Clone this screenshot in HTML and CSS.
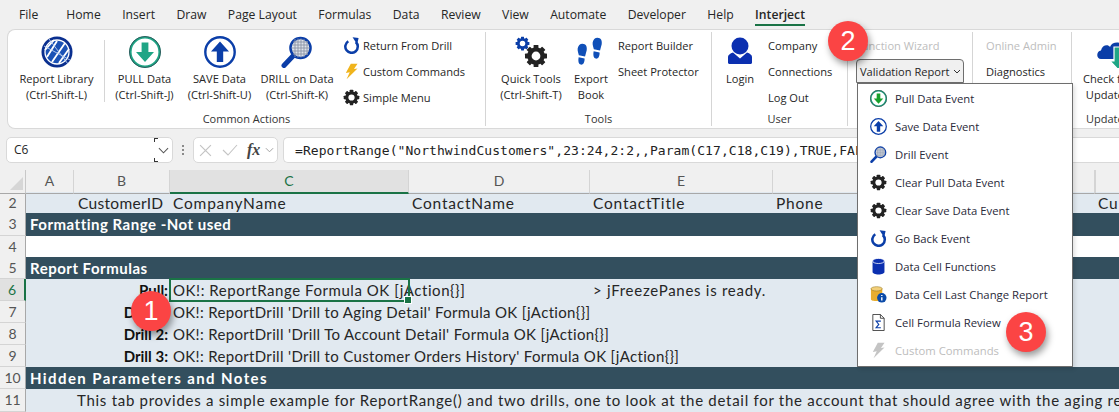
FILE: index.html
```html
<!DOCTYPE html>
<html lang="en">
<head>
<meta charset="utf-8">
<title>Interject ribbon</title>
<link rel="stylesheet" href="styles.css">
</head>
<body>
<svg class="defs" width="0" height="0" aria-hidden="true">
  <defs>
    <symbol id="gear" viewBox="0 0 24 24">
      <circle cx="12" cy="12" r="6.6" fill="none" stroke="currentColor" stroke-width="4.4"/>
      <g fill="currentColor">
        <rect x="9.6" y="1" width="4.8" height="22" rx=".6"/>
        <rect x="9.6" y="1" width="4.8" height="22" rx=".6" transform="rotate(45 12 12)"/>
        <rect x="9.6" y="1" width="4.8" height="22" rx=".6" transform="rotate(90 12 12)"/>
        <rect x="9.6" y="1" width="4.8" height="22" rx=".6" transform="rotate(135 12 12)"/>
      </g>
      <circle cx="12" cy="12" r="4.4" fill="#fff"/>
    </symbol>
    <symbol id="pull" viewBox="0 0 32 32">
      <circle cx="16" cy="16" r="14.6" fill="#fff" stroke="#1fa585" stroke-width="2.4"/>
      <circle cx="16" cy="16" r="15.6" fill="none" stroke="#2b4a52" stroke-width=".8"/>
      <path d="M12.6 6.500h6.800v9.500h5.600L16 26 7 16h5.600z" fill="#1fa585"/>
    </symbol>
    <symbol id="pullsmall" viewBox="0 0 32 32">
      <circle cx="16" cy="16" r="14.5" fill="#fff" stroke="#1fa585" stroke-width="3"/>
      <circle cx="16" cy="16" r="15.5" fill="none" stroke="#333" stroke-width="1"/>
      <path d="M12.6 6.500h6.800v9.500h5.600L16 26 7 16h5.600z" fill="#18a02c"/>
    </symbol>
    <symbol id="save" viewBox="0 0 32 32">
      <circle cx="16" cy="16" r="14.700" fill="#fff" stroke="#0b3ea8" stroke-width="2.400"/>
      <path d="M12.800 26V15.500H7L16 5.500l9 10h-5.800V26z" fill="#0b3ea8"/>
    </symbol>
    <symbol id="drill" viewBox="0 0 32 32">
      <path d="M3 29.500 12 20" stroke="#0b3ea8" stroke-width="5" stroke-linecap="round"/>
      <circle cx="19.500" cy="12" r="10" fill="#dfe3ea" stroke="#0b3ea8" stroke-width="2.600"/>
      <path d="M12 6h15M11 9h17M10.500 12h18M11 15h17M12 18h15M14 3v18M17 2.500v19M20 2.500v19M23 3v18M26 5v14" stroke="#8a93a6" stroke-width=".9"/>
    </symbol>
    <symbol id="back" viewBox="0 0 24 24">
      <path d="M7.500 6A8.800 8.800 0 1 0 18 7" fill="none" stroke="#0b3ea8" stroke-width="3.600"/>
      <path d="M13.500 .5 22 1.500 20 10.500z" fill="#0b3ea8"/>
    </symbol>
    <symbol id="bolt" viewBox="0 0 20 24">
      <path d="M9 1h9.500l-5 7.500 5-.8L3 23l4.500-10L2 14z" fill="currentColor"/>
    </symbol>
    <symbol id="foot" viewBox="0 0 14 26">
      <path d="M7.500.8c3.600 0 5.300 3 4.600 7-.4 2.300-1.300 4.300-1.800 6.700L3.600 13.200C3 10.500 2 8.600 2.300 6 2.700 3 4.800.8 7.500.8z" fill="#0f4fb8"/>
      <path d="M3.400 15.500l6.400 1.200c.2 3-.9 7.200-4 6.700-2.800-.4-3.100-4.600-2.400-7.900z" fill="#0f4fb8"/>
    </symbol>
    <symbol id="db" viewBox="0 0 16 20">
      <path d="M1 3.500v13C1 18 4 19.500 8 19.500s7-1.500 7-3v-13z" fill="#0b2fb0"/>
      <ellipse cx="8" cy="3.500" rx="7" ry="3" fill="#0b2fb0" stroke="#fff" stroke-width=".9"/>
    </symbol>
  </defs>
</svg>

<nav class="tabs">
  <span class="tab tab-file">File</span>
  <span class="tab">Home</span>
  <span class="tab">Insert</span>
  <span class="tab">Draw</span>
  <span class="tab">Page Layout</span>
  <span class="tab">Formulas</span>
  <span class="tab">Data</span>
  <span class="tab">Review</span>
  <span class="tab">View</span>
  <span class="tab">Automate</span>
  <span class="tab">Developer</span>
  <span class="tab">Help</span>
  <span class="tab tab-active">Interject</span>
</nav>

<section class="ribbon">
  <div class="group g-common">
    <div class="group-body">
      <div class="big w-lib">
        <svg class="big-icon" viewBox="0 0 32 32">
          <circle cx="16" cy="16" r="15.500" fill="#0a2f8f"/>
          <circle cx="16" cy="16" r="12" fill="#1b52b5" stroke="#fff" stroke-width="1.300"/>
          <path d="M6 21 16 5M11 26 24 7M18 27 28 13M4 14 13 4" stroke="#fff" stroke-width="1.800" fill="none"/>
          <path d="M3 10 29 24M8 3 27 28" stroke="#bcd0f0" stroke-width=".9"/>
        </svg>
        <span class="big-text">Report Library<br>(Ctrl-Shift-L)</span>
      </div>
      <i class="inner-sep"></i>
      <div class="big w-pull">
        <svg class="big-icon"><use href="#pull"/></svg>
        <span class="big-text">PULL Data<br>(Ctrl-Shift-J)</span>
      </div>
      <div class="big w-save">
        <svg class="big-icon"><use href="#save"/></svg>
        <span class="big-text">SAVE Data<br>(Ctrl-Shift-U)</span>
      </div>
      <div class="big w-drill">
        <svg class="big-icon"><use href="#drill"/></svg>
        <span class="big-text">DRILL on Data<br>(Ctrl-Shift-K)</span>
      </div>
      <div class="small-col sc-common">
        <div class="small"><svg class="small-icon"><use href="#back"/></svg>Return From Drill</div>
        <div class="small"><svg class="small-icon bolt-y"><use href="#bolt"/></svg>Custom Commands</div>
        <div class="small"><svg class="small-icon gear-k"><use href="#gear"/></svg>Simple Menu</div>
      </div>
    </div>
    <div class="group-label">Common Actions</div>
  </div>

  <div class="group g-tools">
    <div class="group-body">
      <div class="big w-quick">
        <svg class="big-icon quick" viewBox="0 0 32 32">
          <svg x="0" y="0" width="15" height="15" class="gear-b"><use href="#gear"/></svg>
          <svg x="9" y="8" width="24" height="24" class="gear-k"><use href="#gear"/></svg>
        </svg>
        <span class="big-text">Quick Tools<br>(Ctrl-Shift-T)</span>
      </div>
      <div class="big w-export">
        <svg class="big-icon" viewBox="0 0 32 32">
          <svg x="0" y="7" width="14" height="24"><use href="#foot"/></svg>
          <svg x="15" y="1" width="14" height="24"><use href="#foot"/></svg>
        </svg>
        <span class="big-text">Export<br>Book</span>
      </div>
      <div class="small-col sc-tools">
        <div class="small">Report Builder</div>
        <div class="small">Sheet Protector</div>
      </div>
    </div>
    <div class="group-label">Tools</div>
  </div>

  <div class="group g-user">
    <div class="group-body">
      <div class="big w-login">
        <svg class="big-icon" viewBox="0 0 32 32">
          <circle cx="16" cy="10" r="8.500" fill="#0b2fb0"/>
          <path d="M4 21c0-2 2-3.500 5-4.500l7 6 7-6c3 1 5 2.500 5 4.500v5.500c0 1-1 1.500-2 1.500H6c-1 0-2-.5-2-1.500z" fill="#0b2fb0"/>
        </svg>
        <span class="big-text">Login</span>
      </div>
      <div class="small-col sc-user">
        <div class="small">Company</div>
        <div class="small">Connections</div>
        <div class="small">Log Out</div>
      </div>
    </div>
    <div class="group-label">User</div>
  </div>

  <div class="group g-func">
    <div class="group-body">
      <div class="small-col sc-func">
        <div class="small disabled">Function Wizard</div>
        <div class="small vr-btn">Validation Report
          <svg class="chev" viewBox="0 0 8 5"><path d="M1 1l3 3 3-3" fill="none" stroke="#333" stroke-width="1"/></svg>
        </div>
      </div>
    </div>
  </div>

  <div class="group g-admin">
    <div class="group-body">
      <div class="small-col sc-admin">
        <div class="small disabled">Online Admin</div>
        <div class="small">Diagnostics</div>
      </div>
    </div>
  </div>

  <div class="group g-upd">
    <div class="group-body">
      <div class="big w-upd">
        <svg class="big-icon upd-icon" viewBox="0 0 32 32">
          <path d="M4 23c-5 0-5-8 0-8.500C5 9 11 8 13 11c2-6 13-6 14 1 5 0 5 11 0 11z" fill="#0b3ea8"/>
          <path d="M17 11h9v14h4l-8.500 9L13 25h4z" fill="#1fa585" stroke="#fff" stroke-width="1.200"/>
        </svg>
        <span class="big-text">Check for<br>Updates</span>
      </div>
    </div>
    <div class="group-label lbl-upd">Updates</div>
  </div>
</section>

<section class="fbar">
  <div class="namebox"><span class="nb-text">C6</span>
    <span class="nb-drop"><svg class="nb-chev" viewBox="0 0 12 7"><path d="M1 1l5 5 5-5" fill="none" stroke="#555" stroke-width="1.100"/></svg></span>
  </div>
  <div class="fdots"><i></i><i></i><i></i></div>
  <div class="fxbox">
    <svg class="fx-x" viewBox="0 0 12 12"><path d="M1 1l10 10M11 1 1 11" stroke="#c4c4c4" stroke-width="1.100"/></svg>
    <svg class="fx-c" viewBox="0 0 16 12"><path d="M1 6l5 5L15 1" fill="none" stroke="#c4c4c4" stroke-width="1.100"/></svg>
    <span class="fx-label">fx</span>
    <svg class="fx-chev" viewBox="0 0 10 6"><path d="M1 1l4 4 4-4" fill="none" stroke="#999" stroke-width="1"/></svg>
  </div>
  <div class="formula">=ReportRange("NorthwindCustomers",23:24,2:2,,Param(C17,C18,C19),TRUE,FALSE,,,,,,,TRUE)</div>
</section>

<section class="sheet">
  <div class="row r-head">
    <div class="corner"><svg class="corner-tri" viewBox="0 0 14 14"><path d="M14 0v14H0z" fill="#d6d6d6"/></svg></div>
    <div class="ch">A</div><div class="ch">B</div><div class="ch ch-on">C</div><div class="ch">D</div><div class="ch">E</div><div class="ch">F</div><div class="ch"></div><div class="ch"></div>
  </div>
  <div class="row h21 blue r-cols">
    <div class="rh">2</div><div class="c"></div><div class="c t-id">CustomerID</div><div class="c">CompanyName</div><div class="c">ContactName</div><div class="c">ContactTitle</div><div class="c">Phone</div><div class="c"></div><div class="c">Cu</div>
  </div>
  <div class="row h23 dark">
    <div class="rh">3</div><div class="c c-title">Formatting Range -Not used</div>
  </div>
  <div class="row h21 white">
    <div class="rh">4</div>
  </div>
  <div class="row h22 dark">
    <div class="rh">5</div><div class="c c-title">Report Formulas</div>
  </div>
  <div class="row h22 blue">
    <div class="rh rh-on">6</div><div class="c"></div><div class="c c-key">Pull:</div><div class="c c-sel">OK!: ReportRange Formula OK [jAction{}]</div><div class="c"></div><div class="c c-note">&gt; jFreezePanes is ready.</div>
  </div>
  <div class="row h22 blue">
    <div class="rh">7</div><div class="c"></div><div class="c c-key">Drill 1:</div><div class="c">OK!: ReportDrill 'Drill to Aging Detail' Formula OK [jAction{}]</div>
  </div>
  <div class="row h22 blue">
    <div class="rh">8</div><div class="c"></div><div class="c c-key">Drill 2:</div><div class="c">OK!: ReportDrill 'Drill To Account Detail' Formula OK [jAction{}]</div>
  </div>
  <div class="row h22 blue">
    <div class="rh">9</div><div class="c"></div><div class="c c-key">Drill 3:</div><div class="c">OK!: ReportDrill 'Drill to Customer Orders History' Formula OK [jAction{}]</div>
  </div>
  <div class="row h22 dark">
    <div class="rh">10</div><div class="c c-title c-title-wide">Hidden Parameters and Notes</div>
  </div>
  <div class="row h23 blue">
    <div class="rh">11</div><div class="c"></div><div class="c c-note">This tab provides a simple example for ReportRange() and two drills, one to look at the detail for the account that should agree with the aging report.</div>
  </div>
</section>

<ul class="menu">
  <li class="mi"><svg class="mi-ic"><use href="#pullsmall"/></svg>Pull Data Event</li>
  <li class="mi"><svg class="mi-ic"><use href="#save"/></svg>Save Data Event</li>
  <li class="mi"><svg class="mi-ic"><use href="#drill"/></svg>Drill Event</li>
  <li class="mi"><svg class="mi-ic gear-k"><use href="#gear"/></svg>Clear Pull Data Event</li>
  <li class="mi"><svg class="mi-ic gear-k"><use href="#gear"/></svg>Clear Save Data Event</li>
  <li class="mi"><svg class="mi-ic"><use href="#back"/></svg>Go Back Event</li>
  <li class="mi"><svg class="mi-ic"><use href="#db"/></svg>Data Cell Functions</li>
  <li class="mi"><svg class="mi-ic" viewBox="0 0 18 18">
      <path d="M1 3v11c0 1.300 3 2 6 2s6-.7 6-2V3z" fill="#e8ad2e"/>
      <ellipse cx="7" cy="3" rx="6" ry="2.300" fill="#f2cf7a" stroke="#9a7a20" stroke-width=".6"/>
      <circle cx="12.500" cy="12.500" r="5" fill="#0b4aa8"/>
      <path d="M12.500 9.500v1.200M12.500 11.800v3.500" stroke="#fff" stroke-width="1.500"/>
    </svg>Data Cell Last Change Report</li>
  <li class="mi"><svg class="mi-ic" viewBox="0 0 18 18">
      <path d="M3 .5h8l4 4v13H3z" fill="#fff" stroke="#333" stroke-width=".9"/>
      <path d="M11 .5v4h4" fill="none" stroke="#333" stroke-width=".9"/>
      <path d="M11.500 7.500h-5l2.800 3.500-2.800 3.500h5" fill="none" stroke="#0b3ea8" stroke-width="1.200"/>
    </svg>Cell Formula Review</li>
  <li class="mi mi-off"><svg class="mi-ic bolt-g"><use href="#bolt"/></svg>Custom Commands</li>
</ul>

<div class="badge b1">1</div>
<div class="badge b2">2</div>
<div class="badge b3">3</div>
</body>
</html>
```
FILE: styles.css
```css
* { box-sizing: border-box; }
html, body { margin: 0; height: 412px; overflow: hidden; }
body {
  position: relative;
  width: 1119px;
  background: #f0f0f0;
  font-family: "Open Sans", "Noto Sans", sans-serif;
  font-size: 11px;
  color: #262626;
}
.defs { position: absolute; }

/* tabs */
.tabs { display: flex; height: 29px; padding-left: 19px; }
.tab { font-size: 12.200px; line-height: 29px; margin-right: 21.400px; white-space: nowrap; position: relative; }
.tab-file { margin-right: 28px; }
.tab-active { font-weight: 600; }
.tab-active::after {
  content: ""; position: absolute; left: 0; right: 0; top: 24px; height: 2px; background: #1a7346;
}

/* ribbon */
.ribbon {
  display: flex;
  height: 100px;
  margin-left: 7px;
  padding: 2px 0 0;
  background: #fff;
  border: 1px solid #d9d9d9;
  border-right: 0;
  border-radius: 8px 0 0 8px;
  overflow: hidden;
}
.group { display: flex; flex-direction: column; height: 94px; border-right: 1px solid #d5d5d5; flex: none; }
.group-body { display: flex; height: 80px; flex: none; }
.group-label { text-align: center; font-size: 11px; line-height: 14px; color: #333; }
.g-common { width: 478px; }
.g-tools { width: 226px; }
.g-user { width: 136px; }
.g-func { width: 125px; }
.g-admin { width: 99px; }
.g-upd { width: 60px; border-right: 0; }
.lbl-upd { text-align: left; padding-left: 14px; }

.big { display: flex; flex-direction: column; align-items: center; flex: none; }
.big-icon { width: 32px; height: 32px; margin-top: 4px; flex: none; }
.big-text { margin-top: 3px; font-size: 11.100px; line-height: 16px; text-align: center; white-space: nowrap; }
.w-lib { width: 95px; margin-left: 1px; }
.w-pull { width: 75px; margin-left: 2px; }
.w-save { width: 75px; }
.w-drill { width: 80px; }
.w-quick { width: 90px; }
.w-export { width: 30px; }
.w-login { width: 56px; }
.w-upd { width: 60px; align-items: flex-start; padding-left: 11px; }
.upd-icon { margin-left: 14px; }
.inner-sep { width: 1px; height: 62px; margin-top: 8px; background: #d5d5d5; flex: none; }

.small-col { display: flex; flex-direction: column; flex: none; }
.small { display: flex; align-items: center; flex: none; height: 26px; font-size: 11.100px; white-space: nowrap; }
.small-icon { width: 17px; height: 17px; margin-right: 3px; flex: none; }
.sc-common { margin-left: 6px; }
.sc-tools { margin-left: 12px; }
.sc-func { margin-left: 8px; }
.sc-admin { margin-left: 13px; }
.disabled { color: #bdbdbd; }
.vr-btn {
  width: 108px; height: 24px; padding-left: 3px; margin-top: 1px;
  background: #f0f0f0; border: 1px solid #6e6e6e; border-radius: 4px 4px 0 0;
}
.chev { width: 8px; height: 5px; margin-left: 4px; }
.bolt-y { color: #f0b41c; }
.bolt-g { color: #c4c4c4; }
.gear-k { color: #222; }
.gear-b { color: #0b3ea8; }

/* formula bar */
.fbar { display: flex; height: 26px; margin: 8px 0 7px 6px; }
.namebox {
  display: flex; justify-content: space-between; width: 167px;
  background: #fff; border: 1px solid #d9d9d9; border-radius: 5px;
}
.nb-text { padding-left: 7px; font-size: 12px; line-height: 24px; }
.nb-drop {
  width: 18px; display: flex; align-items: center; justify-content: center;
  background:
    linear-gradient(#333, #333) left top / 1px 4px no-repeat,
    linear-gradient(#333, #333) left top / 4px 1px no-repeat,
    linear-gradient(#333, #333) left bottom / 1px 4px no-repeat,
    linear-gradient(#333, #333) left bottom / 4px 1px no-repeat;
}
.nb-chev { width: 11px; height: 7px; }
.fdots { width: 20px; display: flex; flex-direction: column; align-items: center; justify-content: center; gap: 2px; }
.fdots i { width: 2px; height: 2px; background: #8a8a8a; }
.fxbox {
  display: flex; align-items: center; width: 85px; padding-left: 5px;
  background: #fff; border: 1px solid #d9d9d9; border-radius: 5px;
}
.fx-x { width: 13px; height: 13px; margin-right: 10px; flex: none; }
.fx-c { width: 16px; height: 12px; margin-right: 9px; flex: none; }
.fx-label { font-family: "Liberation Serif", serif; font-style: italic; font-weight: 700; font-size: 16px; color: #444; }
.fx-chev { width: 9px; height: 6px; margin-left: 5px; }
.formula {
  flex: 1; margin-left: 5px; padding-left: 11px; overflow: hidden; white-space: nowrap;
  background: #fff; border: 1px solid #d9d9d9; border-right: 0; border-radius: 5px 0 0 5px;
  font-family: "DejaVu Sans Mono", monospace; font-size: 13px; letter-spacing: .06px; line-height: 25px; color: #222;
}

/* sheet */
.sheet { overflow: hidden; font-family: "Lato", "Open Sans", sans-serif; font-size: 15px; letter-spacing: .33px; color: #262626; }
.row {
  display: grid;
  grid-template-columns: 26px 48px 96px 239px 181px 183px 322px 0 30px;
}
.r-head { height: 22px; }
.r-cols { font-size: 15.500px; letter-spacing: .8px; }
.h21 { height: 21px; }
.h22 { height: 22px; }
.h23 { height: 23px; }
.blue { background: #e1e9f0; }
.dark { background: #334f5e; color: #fff; }
.white { background: #fff; }
.corner { position: relative; border-right: 1px solid #c8c8c8; border-bottom: 1px solid #a8a8a8; }
.corner-tri { position: absolute; right: 2px; bottom: 3px; width: 13px; height: 13px; }
.ch {
  text-align: center; line-height: 22px; font-size: 14px; letter-spacing: 0; color: #555;
  border-right: 1px solid #d4d4d4; border-bottom: 1px solid #a8a8a8;
}
.ch-on { background: #e1e1e1; color: #1a7346; border-bottom: 2px solid #1a7346; }
.rh {
  background: #f0f0f0; text-align: center; font-size: 14px; letter-spacing: 0; line-height: 21px; color: #555;
  border-right: 1px solid #a8a8a8; border-bottom: 1px solid #d4d4d4;
}
.rh-on { background: #e1e1e1; color: #1a7346; border-right: 2px solid #1a7346; }
.c { padding-left: 3px; line-height: 22px; white-space: nowrap; min-width: 0; }
.t-id { padding-left: 4px; letter-spacing: .3px; }
.c-title { grid-column: 2 / -1; padding-left: 4px; font-weight: 700; letter-spacing: .5px; }
.c-title-wide { letter-spacing: 1.400px; }
.c-key { text-align: right; padding: 0 2px 0 0; font-weight: 700; color: #111; letter-spacing: 0; }
.c-note { padding-left: 3px; letter-spacing: .72px; }
.c-sel { position: relative; letter-spacing: .55px; outline: 2px solid #1a7346; outline-offset: -1px; }
.c-sel::after {
  content: ""; position: absolute; right: -3px; bottom: -3px; width: 6px; height: 6px;
  background: #1a7346; border: 1px solid #fff;
}

/* dropdown */
.menu {
  position: absolute; left: 857px; top: 83px; width: 216px; height: 284px;
  margin: 0; padding: 0; list-style: none;
  background: #fff; border: 1px solid #6e6e6e;
  box-shadow: 2px 2px 4px rgba(0,0,0,.12);
}
.mi { display: flex; align-items: center; height: 28px; padding-left: 12px; font-size: 11.300px; color: #2a2a3a; white-space: nowrap; }
.mi-ic { width: 17px; height: 17px; margin-right: 8px; flex: none; }
.mi-off { color: #bdbdbd; }

/* callouts */
.badge {
  position: absolute; width: 40px; height: 40px; border-radius: 50%;
  background: #fb4444; color: #fff; text-align: center;
  font-family: "Liberation Sans", sans-serif; font-size: 27px; line-height: 40px;
  box-shadow: 2px 4px 7px rgba(0,0,0,.4);
}
.b1 { left: 131px; top: 291px; }
.b2 { left: 828px; top: 21px; }
.b3 { left: 1006px; top: 312px; }
```
